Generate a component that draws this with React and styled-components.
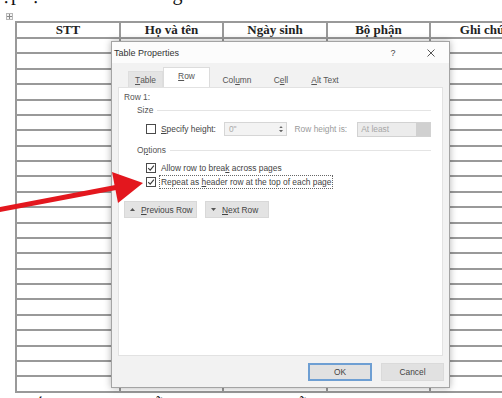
import styled, { createGlobalStyle } from "styled-components";

const GlobalStyle = createGlobalStyle`
    html, body {
        margin: 0;
        padding: 0;
        background: #fff;
        overflow: hidden;
    }
`;

const Page = styled.div`
    position: relative;
    width: 502px;
    height: 398px;
    overflow: hidden;
    background: #fff;
    font-family: "Liberation Serif", "Times New Roman", serif;
    color: #111;
`;

const TopLine = styled.div`
    font-size: 20px;
    line-height: 20px;
    margin: -17px 0 18px 2px;
    white-space: nowrap;
`;

const TableWrap = styled.div`
    position: relative;
    margin-left: 15px;
    width: max-content;
`;

const MoveHandle = styled.div`
    position: absolute;
    left: -9px;
    top: -8px;
    width: 7px;
    height: 7px;
    box-sizing: border-box;
    border: 1px solid #b8b8b8;
    background: #f4f4f4;
    display: flex;
    align-items: center;
    justify-content: center;
`;

const Grid = styled.div`
    display: grid;
    grid-template-columns: 104px 103px 104px 103px 104px;
    grid-template-rows: 16px repeat(23, 15.39px);
    border-top: 2px solid #999;
    border-left: 2px solid #999;
`;

const Cell = styled.div`
    box-sizing: border-box;
    border-right: 2px solid #999;
    border-bottom: 2px solid #999;
    display: flex;
    align-items: center;
    justify-content: center;
    font-size: 13px;
    font-weight: bold;
    color: #222;
    white-space: nowrap;
`;

const BottomLine = styled.div`
    font-size: 20px;
    line-height: 20px;
    margin: 2px 0 0 19px;
    white-space: nowrap;
`;

const Dialog = styled.div`
    position: absolute;
    left: 111px;
    top: 41px;
    width: 339px;
    height: 347px;
    box-sizing: border-box;
    display: flex;
    flex-direction: column;
    background: #f2f2f2;
    border: 1px solid #a4a4a4;
    box-shadow: 0 0 7px rgba(0, 0, 0, 0.3);
    font-family: "Liberation Sans", Arial, sans-serif;
    font-size: 8.4px;
    color: #444;
`;

const TitleBar = styled.div`
    height: 21px;
    flex: none;
    display: flex;
    align-items: center;
    background: #fcfcfc;
    padding-left: 2px;
`;

const Title = styled.span`
    font-size: 9px;
    color: #333;
    flex: 1;
`;

const TitleButton = styled.span`
    width: 12px;
    display: flex;
    justify-content: center;
    font-size: 9px;
    color: #444;
    margin-right: ${(p) => p.$mr}px;
`;

const TabStrip = styled.div`
    height: 24px;
    flex: none;
    display: flex;
    align-items: flex-end;
    padding-left: 16px;
`;

const Tab = styled.div`
    box-sizing: border-box;
    width: ${(p) => p.$w}px;
    height: ${(p) => (p.$active ? 20 : 16)}px;
    display: flex;
    align-items: center;
    justify-content: center;
    background: ${(p) => (p.$active ? "#fff" : p.$hover ? "#e4e4e4" : "transparent")};
    border: 1px solid ${(p) => (p.$active ? "#dcdcdc" : p.$hover ? "#dedede" : "transparent")};
    border-bottom: none;
    color: #555;
    padding-bottom: ${(p) => (p.$active ? 3 : 0)}px;
`;

const Panel = styled.div`
    flex: 1;
    margin: 0 6px;
    background: #fff;
    border: 1px solid #e2e2e2;
    display: flex;
    flex-direction: column;
    padding: 0 11px 0 5px;
`;

const RowLabel = styled.div`
    margin-top: 4px;
    height: 10px;
    line-height: 10px;
    color: #555;
`;

const GroupHeader = styled.div`
    margin: ${(p) => p.$mt}px 0 0 13px;
    height: 10px;
    display: flex;
    align-items: center;
    gap: 4px;
    color: #555;

    &::after {
        content: "";
        flex: 1;
        height: 1px;
        background: #e4e4e4;
    }
`;

const SizeRow = styled.div`
    margin: 7px 0 0 22px;
    height: 14px;
    display: flex;
    align-items: center;
`;

const CheckRow = styled.div`
    margin: ${(p) => p.$mt}px 0 0 22px;
    height: 14px;
    display: flex;
    align-items: center;
`;

const Box = styled.span`
    width: 10px;
    height: 10px;
    flex: none;
    box-sizing: border-box;
    border: 1px solid #4a4a4a;
    background: #fff;
    display: inline-flex;
    align-items: center;
    justify-content: center;
`;

const Label = styled.span`
    margin-left: 3px;
    padding: 1px 1px;
    border: 1px dotted ${(p) => (p.$focus ? "#666" : "transparent")};
    color: #444;
    white-space: nowrap;
`;

const Muted = styled.span`
    color: #9a9a9a;
    margin-left: ${(p) => p.$ml}px;
    white-space: nowrap;
`;

const NumberInput = styled.div`
    width: 66px;
    height: 14px;
    box-sizing: border-box;
    margin-left: ${(p) => p.$ml}px;
    border: 1px solid #d6d6d6;
    background: #f3f3f3;
    display: flex;
    align-items: center;
    padding-left: 4px;
    color: #aaa;
`;

const Spin = styled.div`
    margin-left: auto;
    width: 10px;
    height: 100%;
    display: flex;
    flex-direction: column;
    align-items: center;
    justify-content: center;
    gap: 2px;
`;

const Select = styled.div`
    width: 78px;
    height: 15px;
    box-sizing: border-box;
    margin-left: 10px;
    border: 1px solid #d2d2d2;
    background: #ececec;
    display: flex;
    align-items: center;
    padding-left: 3px;
    color: #a6a6a6;
`;

const SelectArrow = styled.div`
    margin-left: auto;
    width: 14px;
    height: 100%;
    background: #d0d0d0;
`;

const NavRow = styled.div`
    margin-top: 12px;
    display: flex;
    gap: 8px;
`;

const NavButton = styled.div`
    width: ${(p) => p.$w}px;
    height: 17px;
    box-sizing: border-box;
    background: #e3e3e3;
    border: 1px solid #d8d8d8;
    display: flex;
    align-items: center;
    padding-left: 5px;
    gap: 6px;
    color: #444;
    white-space: nowrap;
`;

const Footer = styled.div`
    height: 31px;
    flex: none;
    display: flex;
    align-items: center;
    justify-content: flex-end;
    gap: 9px;
    padding-right: 5px;
`;

const FooterButton = styled.div`
    width: ${(p) => p.$w}px;
    height: 18px;
    box-sizing: border-box;
    background: #e1e1e1;
    border: ${(p) => (p.$primary ? "2px solid #6e9fd3" : "1px solid #dadada")};
    display: flex;
    align-items: center;
    justify-content: center;
    color: #444;
`;

const Arrow = styled.svg`
    position: absolute;
    left: 0;
    top: 165px;
`;

const Check = () => (
    <svg width="8" height="8" viewBox="0 0 8 8">
        <path d="M1.2 4.2 L3.2 6.2 L6.9 1.6" stroke="#3a3a3a" strokeWidth="1.1" fill="none" />
    </svg>
);

const Tri = ({ up, size = 5, color = "#555" }) => (
    <svg width={size} height={size * 0.6} viewBox="0 0 10 6">
        <path d={up ? "M0 6 L5 0 L10 6 Z" : "M0 0 L5 6 L10 0 Z"} fill={color} />
    </svg>
);

const headers = ["STT", "Họ và tên", "Ngày sinh", "Bộ phận", "Ghi chú"];
const bodyCells = Array.from({ length: 23 * 5 }, (_, i) => i);

const App = () => {
    return (
        <Page>
            <GlobalStyle />
            <TopLine>ập lại tiêu đề cho bảng</TopLine>
            <TableWrap>
                <MoveHandle>
                    <svg width="5" height="5" viewBox="0 0 5 5">
                        <path d="M2.5 0 V5 M0 2.5 H5" stroke="#888" strokeWidth="1" />
                    </svg>
                </MoveHandle>
                <Grid>
                    {headers.map((h) => (
                        <Cell key={h}>{h}</Cell>
                    ))}
                    {bodyCells.map((i) => (
                        <Cell key={i} />
                    ))}
                </Grid>
            </TableWrap>
            <BottomLine>Bấm OK, bảng vẫn tự lặp lại khá dễ dàng ở các trang sau.</BottomLine>

            <Dialog>
                <TitleBar>
                    <Title>Table Properties</Title>
                    <TitleButton $mr={26}>?</TitleButton>
                    <TitleButton $mr={12}>
                        <svg width="8" height="8" viewBox="0 0 8 8">
                            <path d="M0.5 0.5 L7.5 7.5 M7.5 0.5 L0.5 7.5" stroke="#444" strokeWidth="0.9" />
                        </svg>
                    </TitleButton>
                </TitleBar>
                <TabStrip>
                    <Tab $w={35} $hover>
                        <u>T</u>able
                    </Tab>
                    <Tab $w={47} $active>
                        <u>R</u>ow
                    </Tab>
                    <Tab $w={54}>
                        Col<u>u</u>mn
                    </Tab>
                    <Tab $w={34}>
                        C<u>e</u>ll
                    </Tab>
                    <Tab $w={54}>
                        <u>A</u>lt Text
                    </Tab>
                </TabStrip>
                <Panel>
                    <RowLabel>Row 1:</RowLabel>
                    <GroupHeader $mt={3}>Size</GroupHeader>
                    <SizeRow>
                        <Box />
                        <Label>
                            <u>S</u>pecify height:
                        </Label>
                        <NumberInput $ml={6}>
                            0"
                            <Spin>
                                <Tri up size={4} color="#666" />
                                <Tri size={4} color="#666" />
                            </Spin>
                        </NumberInput>
                        <Muted $ml={8}>Row height is:</Muted>
                        <Select>
                            At least
                            <SelectArrow />
                        </Select>
                    </SizeRow>
                    <GroupHeader $mt={9}>
                        <span>
                            O<u>p</u>tions
                        </span>
                    </GroupHeader>
                    <CheckRow $mt={6}>
                        <Box>
                            <Check />
                        </Box>
                        <Label>
                            Allow row to brea<u>k</u> across pages
                        </Label>
                    </CheckRow>
                    <CheckRow $mt={0}>
                        <Box>
                            <Check />
                        </Box>
                        <Label $focus>
                            Repeat as <u>h</u>eader row at the top of each page
                        </Label>
                    </CheckRow>
                    <NavRow>
                        <NavButton $w={73}>
                            <Tri up size={5} />
                            <span>
                                <u>P</u>revious Row
                            </span>
                        </NavButton>
                        <NavButton $w={64}>
                            <Tri size={5} />
                            <span>
                                <u>N</u>ext Row
                            </span>
                        </NavButton>
                    </NavRow>
                </Panel>
                <Footer>
                    <FooterButton $w={64} $primary>OK</FooterButton>
                    <FooterButton $w={63}>Cancel</FooterButton>
                </Footer>
            </Dialog>

            <Arrow width="150" height="50" viewBox="0 0 150 50">
                <line x1="-2" y1="44.8" x2="117" y2="22.2" stroke="#e3171e" strokeWidth="5" />
                <polygon points="112,7 143,18 118,38" fill="#e3171e" />
            </Arrow>
        </Page>
    );
};

export default App;
